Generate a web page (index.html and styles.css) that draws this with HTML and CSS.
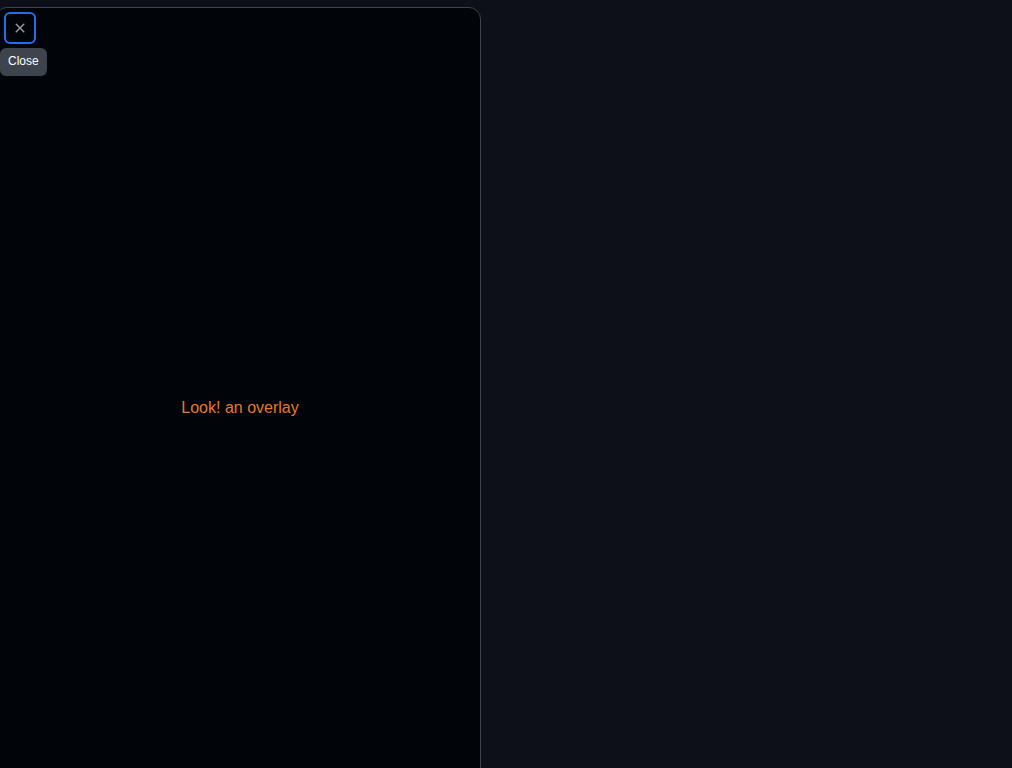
FILE: index.html
```html
<!DOCTYPE html>
<html>
<head>
<meta charset="utf-8">
<link rel="stylesheet" href="styles.css">
</head>
<body>
<div class="overlay">
  <div class="overlay-head">
    <button class="close-btn" aria-label="Close">
      <svg width="16" height="16" viewBox="0 0 16 16"><path fill="currentColor" d="M3.72 3.72a.75.75 0 0 1 1.06 0L8 6.94l3.220-3.22a.749.749 0 0 1 1.275.326.749.749 0 0 1-.215.734L9.06 8l3.22 3.22a.749.749 0 0 1-.326 1.275.749.749 0 0 1-.734-.215L8 9.06l-3.22 3.22a.751.751 0 0 1-1.042-.018.751.751 0 0 1-.018-1.042L6.94 8 3.72 4.78a.75.75 0 0 1 0-1.06Z"/></svg>
    </button>
    <span class="tooltip">Close</span>
  </div>
  <div class="overlay-body">
    <p class="message">Look! an overlay</p>
  </div>
</div>
</body>
</html>
```
FILE: styles.css
```css
html, body {
  margin: 0;
  padding: 0;
  height: 100%;
  background: #0d1117;
  font-family: "Liberation Sans", Arial, sans-serif;
  overflow: hidden;
}
.overlay {
  position: fixed;
  left: -5px;
  top: 7px;
  width: 486px;
  height: 800px;
  box-sizing: border-box;
  background: #010409;
  border: 1px solid #3d444d;
  border-radius: 12px;
}
.overlay-head {
  position: relative;
  padding: 4px 0 0 8px;
  height: 32px;
}
.close-btn {
  width: 32px;
  height: 32px;
  box-sizing: border-box;
  display: flex;
  align-items: center;
  justify-content: center;
  background: transparent;
  border: 2px solid #1f6feb;
  border-radius: 6px;
  color: #9198a1;
  padding: 0;
  margin: 0;
}
.tooltip {
  position: absolute;
  left: 4px;
  top: 40px;
  height: 28px;
  padding: 0 8px 2px;
  box-sizing: border-box;
  display: flex;
  align-items: center;
  background: #3d444d;
  color: #ffffff;
  font-size: 12px;
  border-radius: 6px;
}
.overlay-body {
  height: 726px;
  display: flex;
  align-items: center;
  justify-content: center;
  padding-left: 4px;
  box-sizing: border-box;
}
.message {
  margin: 0;
  margin-top: 2px;
  color: #e5792f;
  font-size: 16px;
}
```
